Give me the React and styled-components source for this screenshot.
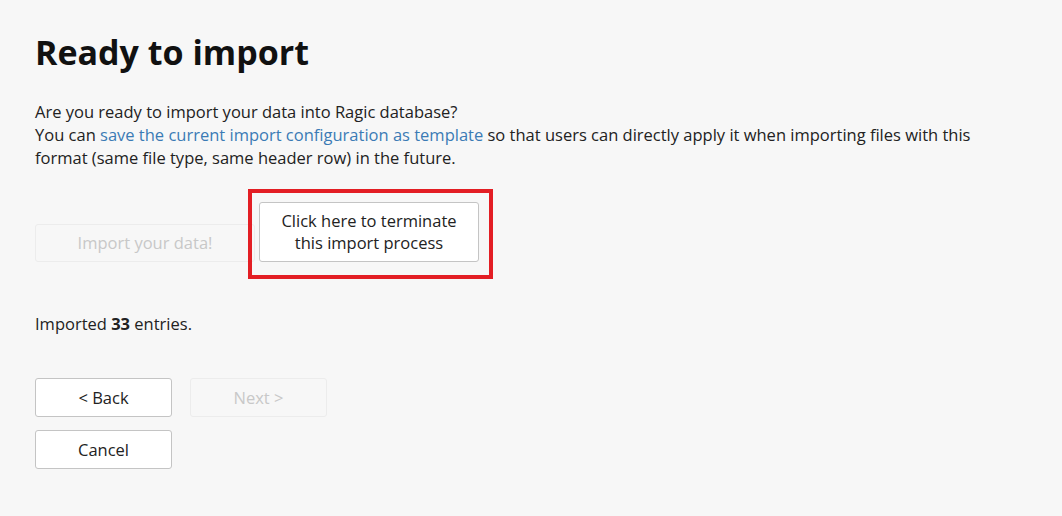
import React from 'react';
import styled, { createGlobalStyle } from 'styled-components';

const GlobalStyle = createGlobalStyle`
  html, body {
    margin: 0;
    background: #f7f7f7;
  }
  body {
    font-family: 'Open Sans', 'Noto Sans', sans-serif;
    color: #222222;
  }
`;

const Page = styled.div`
  padding: 30px 35px 40px;
  min-height: 516px;
  box-sizing: border-box;
`;

const Title = styled.h1`
  margin: 0;
  font-size: 34px;
  font-weight: 700;
  line-height: 44px;
  color: #111111;
`;

const Intro = styled.p`
  margin: 26px 0 0;
  max-width: 960px;
  font-size: 16.5px;
  line-height: 23px;
`;

const Link = styled.a`
  color: #3b7bb5;
  text-decoration: none;
  cursor: pointer;
`;

const ActionRow = styled.div`
  display: flex;
  align-items: flex-end;
  gap: 4px;
  margin-top: 33px;
`;

const Button = styled.button`
  box-sizing: border-box;
  width: ${(p) => p.$width || 137}px;
  height: ${(p) => p.$height || 39}px;
  padding: 0 10px;
  font-family: inherit;
  font-size: 16.5px;
  line-height: 22px;
  border-radius: 3px;
  background: ${(p) => (p.disabled ? '#f7f7f7' : '#ffffff')};
  border: 1px solid ${(p) => (p.disabled ? '#ececec' : '#c4c4c4')};
  color: ${(p) => (p.disabled ? '#c8c8c8' : '#222222')};
  cursor: ${(p) => (p.disabled ? 'default' : 'pointer')};
`;

const Highlight = styled.div`
  position: relative;
`;

const HighlightFrame = styled.span`
  position: absolute;
  left: -11px;
  top: -13px;
  right: -14px;
  bottom: -17px;
  border: 4px solid #e31e24;
  pointer-events: none;
`;

const Summary = styled.p`
  margin: 50px 0 0;
  font-size: 16.5px;
  line-height: 23px;
`;

const NavGrid = styled.div`
  display: grid;
  grid-template-columns: 137px 137px;
  column-gap: 18px;
  row-gap: 13px;
  margin-top: 43px;
`;

export default function App() {
  return (
    <Page>
      <GlobalStyle />
      <Title>Ready to import</Title>
      <Intro>
        Are you ready to import your data into Ragic database?
        <br />
        You can <Link>save the current import configuration as template</Link> so that users can
        directly apply it when importing files with this format (same file type, same header row)
        in the future.
      </Intro>
      <ActionRow>
        <Button disabled $width={220} $height={38}>
          Import your data!
        </Button>
        <Highlight>
          <Button $width={220} $height={60}>
            Click here to terminate
            <br />
            this import process
          </Button>
          <HighlightFrame />
        </Highlight>
      </ActionRow>
      <Summary>
        Imported <b>33</b> entries.
      </Summary>
      <NavGrid>
        <Button>&lt; Back</Button>
        <Button disabled>Next &gt;</Button>
        <Button>Cancel</Button>
      </NavGrid>
    </Page>
  );
}
